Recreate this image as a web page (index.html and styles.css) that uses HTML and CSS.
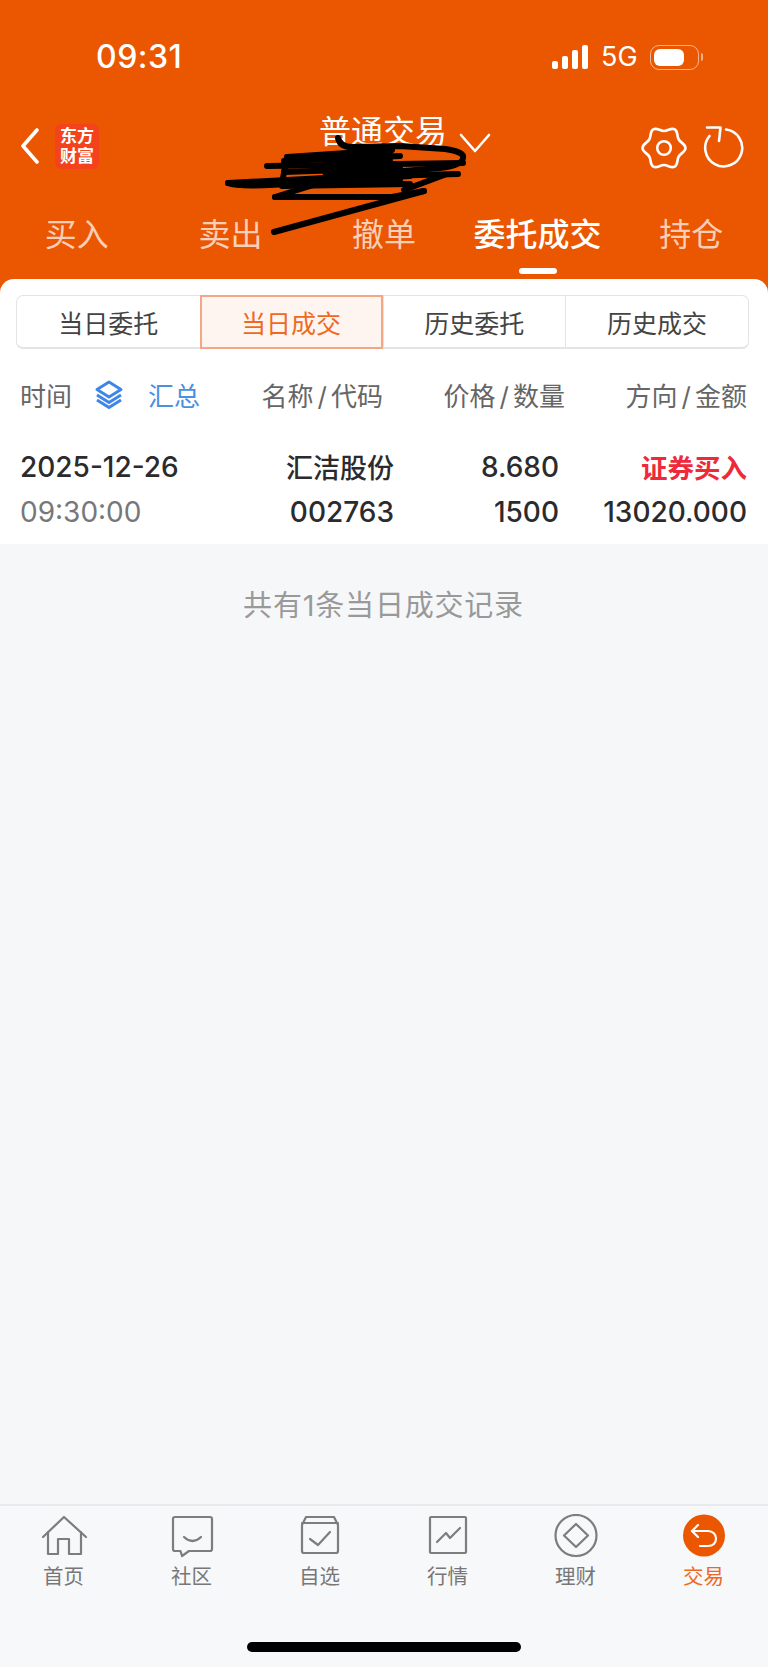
FILE: index.html
```html
<!DOCTYPE html>
<html lang="zh-CN">
<head>
  <meta charset="UTF-8">
  <meta name="viewport" content="width=device-width, initial-scale=1.0">
  <title>普通交易</title>
  <link rel="stylesheet" href="styles.css">
</head>
<body>
  <div class="app">
    <header class="header">
      <!-- 状态栏 -->
      <div class="status-bar">
        <span class="clock">09:31</span>
        <div class="status-icons">
          <div class="signal"><i class="b1"></i><i class="b2"></i><i class="b3"></i><i class="b4"></i></div>
          <span class="network">5G</span>
          <div class="battery"><div class="battery-level"></div></div>
          <div class="battery-tip"></div>
        </div>
      </div>

      <!-- 导航 -->
      <div class="nav-bar">
        <div class="nav-left">
          <svg class="back" width="20" height="36" viewBox="0 0 20 36"><path d="M17 2 L3 18 L17 34"/></svg>
          <div class="logo"><span>东方</span><span>财富</span></div>
        </div>
        <div class="nav-title">
          <span class="title-text">普通交易</span>
          <svg class="title-arrow" width="32" height="20" viewBox="0 0 32 20"><path d="M2 2 L16 18 L30 2"/></svg>
        </div>
        <div class="nav-right">
          <svg width="48" height="48" viewBox="0 0 48 48" class="line-icon">
            <path d="M45.5 24C45.5 28 40.72 29.04 38.72 32.5C36.72 35.96 38.21 40.62 34.75 42.62C31.29 44.62 28 41 24 41C20 41 16.71 44.62 13.25 42.62C9.79 40.62 11.28 35.96 9.28 32.5C7.28 29.04 2.5 28 2.5 24C2.5 20 7.28 18.96 9.28 15.5C11.28 12.04 9.79 7.38 13.25 5.38C16.71 3.38 20 7 24 7C28 7 31.29 3.38 34.75 5.38C38.21 7.38 36.72 12.04 38.72 15.5C40.72 18.96 45.5 20 45.5 24Z"/>
            <circle cx="24" cy="24" r="6.8"/>
          </svg>
          <svg width="44" height="48" viewBox="0 0 44 48" class="line-icon refresh">
            <path d="M25 5.5 A18.5 18.5 0 1 1 8.5 12"/>
            <path d="M6 3.5 H19.5 L18 17"/>
          </svg>
        </div>
      </div>

      <!-- 交易菜单 -->
      <nav class="trade-tabs">
        <a class="trade-tab">买入</a>
        <a class="trade-tab">卖出</a>
        <a class="trade-tab">撤单</a>
        <a class="trade-tab active">委托成交</a>
        <a class="trade-tab">持仓</a>
      </nav>

      <!-- 涂抹 -->
      <svg class="scribble" width="768" height="279" viewBox="0 0 768 279">
        <path d="M338 138 Q340 147 352 147 L400 146 L445 149 Q465 152 463 158 Q462 166 440 168 L392 172"/>
        <path d="M287 157 L392 150"/>
        <path d="M287 157 L282 183"/>
        <path d="M267 166 L463 163"/>
        <path d="M284 161 L400 156"/>
        <path d="M284 172 L400 168"/>
        <path d="M228 183 L343 177 L458 174"/>
        <path d="M228 183 Q240 188 300 183 L400 181"/>
        <path d="M282 186 L410 184"/>
        <path d="M275 197 L392 197 L424 191"/>
        <path d="M275 197 L323 182 L410 176"/>
        <path d="M274 232 L424 191"/>
        <path d="M404 190 L444 175"/>
        <polygon class="blob" points="338,152 392,147 394,178 372,183 328,181 318,168"/>
      </svg>
    </header>

    <section class="panel">
      <div class="segment">
        <div class="segment-item">当日委托</div>
        <div class="segment-item active">当日成交</div>
        <div class="segment-item">历史委托</div>
        <div class="segment-item">历史成交</div>
      </div>

      <div class="row head-row">
        <div class="col-time">
          <span>时间</span>
          <svg width="30" height="30" viewBox="0 0 30 30" class="stack-icon">
            <path d="M15 2 L27 9.5 L15 17 L3 9.5Z"/>
            <path d="M3 15 L15 22.5 L27 15"/>
            <path d="M3 20 L15 27.5 L27 20"/>
          </svg>
          <span class="summary">汇总</span>
        </div>
        <div class="col-name">名称<span class="slash">/</span>代码</div>
        <div class="col-price">价格<span class="slash">/</span>数量</div>
        <div class="col-amount">方向<span class="slash">/</span>金额</div>
      </div>

      <div class="row trade-row">
        <div class="col-time strong">2025-12-26</div>
        <div class="col-name strong stock-name">汇洁股份</div>
        <div class="col-price strong">8.680</div>
        <div class="col-amount buy">证券买入</div>
      </div>
      <div class="row trade-row second">
        <div class="col-time muted">09:30:00</div>
        <div class="col-name strong">002763</div>
        <div class="col-price strong">1500</div>
        <div class="col-amount strong">13020.000</div>
      </div>
    </section>

    <main class="records">
      <p class="records-note">共有1条当日成交记录</p>
    </main>

    <footer class="tabbar">
      <div class="tabbar-items">
        <a class="tabbar-item">
          <svg width="48" height="44" viewBox="0 0 48 44"><path d="M3 23 L24 3 L46 23"/><path d="M8 18 V40 H18 V25 H29 V40 H41 V18"/></svg>
          <span>首页</span>
        </a>
        <a class="tabbar-item">
          <svg width="48" height="44" viewBox="0 0 48 44"><path d="M7 3 H42 a2 2 0 0 1 2 2 V35 a2 2 0 0 1 -2 2 H21 L14 42 L12.5 37 H7 a2 2 0 0 1 -2 -2 V5 a2 2 0 0 1 2 -2Z"/><path d="M16 23 Q24.5 31 33 23"/></svg>
          <span>社区</span>
        </a>
        <a class="tabbar-item">
          <svg width="48" height="44" viewBox="0 0 48 44"><path d="M6 11 L10 3 H38 L42 11 V37 a2 2 0 0 1 -2 2 H8 a2 2 0 0 1 -2 -2Z"/><path d="M6 9 H42"/><path d="M14 25 L22 31 L34 18"/></svg>
          <span>自选</span>
        </a>
        <a class="tabbar-item">
          <svg width="48" height="44" viewBox="0 0 48 44"><rect x="6" y="3" width="36" height="36" rx="1"/><path d="M13 28 L22 19 L26 24 L36 14"/></svg>
          <span>行情</span>
        </a>
        <a class="tabbar-item">
          <svg width="48" height="44" viewBox="0 0 48 44"><circle cx="24" cy="21.5" r="20.5"/><path d="M24 10 L36 21.5 L24 33 L12 21.5Z"/></svg>
          <span>理财</span>
        </a>
        <a class="tabbar-item active">
          <svg width="48" height="44" viewBox="0 0 48 44"><circle class="disc" cx="24" cy="21.5" r="21"/><path class="arrow" d="M18 11 L12 17 L18 23"/><path class="arrow" d="M12 17 H28 C33 17 36 20.5 36 24.5 C36 29 33 32 28 32 H20"/></svg>
          <span>交易</span>
        </a>
      </div>
      <div class="home-bar"></div>
    </footer>
  </div>
</body>
</html>
```

FILE: styles.css
```css
* {
  box-sizing: border-box;
}

body {
  margin: 0;
  font-family: Inter, "Noto Sans CJK SC", sans-serif;
}

.app {
  width: 768px;
  height: 1667px;
  display: flex;
  flex-direction: column;
  background-color: #eb5600;
  overflow: hidden;
}

/* header */
.header {
  position: relative;
  height: 279px;
  color: #fff;
}

.status-bar {
  height: 117px;
  padding: 40px 65px 0 96px;
  display: flex;
  justify-content: space-between;
  align-items: flex-start;
}

.clock {
  font-size: 32px;
  font-weight: 500;
  line-height: 34px;
  letter-spacing: 0.5px;
}

.status-icons {
  display: flex;
  align-items: center;
  height: 34px;
}

.signal {
  display: flex;
  align-items: flex-end;
  gap: 4px;
  height: 24px;
}

.signal i {
  display: block;
  width: 6px;
  background-color: #fff;
  border-radius: 2px;
}

.signal .b1 { height: 8px; }
.signal .b2 { height: 13px; }
.signal .b3 { height: 19px; }
.signal .b4 { height: 24px; }

.network {
  margin-left: 13px;
  font-size: 27px;
  line-height: 30px;
  width: 49px;
}

.battery {
  width: 49px;
  height: 25px;
  padding: 3px;
  border: 1.5px solid rgba(255, 255, 255, 0.55);
  border-radius: 9px;
}

.battery-level {
  width: 30px;
  height: 100%;
  background-color: #fff;
  border-radius: 6px;
}

.battery-tip {
  width: 2px;
  height: 8px;
  margin-left: 2px;
  background-color: rgba(255, 255, 255, 0.55);
  border-radius: 0 2px 2px 0;
}

.nav-bar {
  height: 58px;
  position: relative;
  display: flex;
  justify-content: space-between;
  align-items: center;
  padding: 0 23px 0 20px;
}

.nav-left {
  display: flex;
  align-items: center;
  gap: 15px;
}

.back path,
.title-arrow path,
.line-icon path,
.line-icon circle {
  fill: none;
  stroke: #fff;
  stroke-width: 2.6;
  stroke-linecap: round;
  stroke-linejoin: round;
}

.back path {
  stroke-width: 3.6;
}

.logo {
  width: 44px;
  height: 45px;
  background-color: #f4431c;
  border-radius: 6px;
  display: flex;
  flex-direction: column;
  align-items: center;
  justify-content: center;
  font-size: 17px;
  font-weight: 700;
  line-height: 20px;
}

.nav-title {
  position: absolute;
  left: 319px;
  top: 0;
  display: flex;
}

.title-text {
  font-size: 32px;
  line-height: 40px;
  margin-top: -5px;
}

.title-arrow {
  margin: 16px 0 0 12px;
}

.nav-right {
  display: flex;
  align-items: center;
  gap: 13px;
  margin-top: 3px;
}

.trade-tabs {
  display: flex;
  margin-top: 39px;
}

.trade-tab {
  flex: 1;
  text-align: center;
  font-size: 32px;
  line-height: 42px;
  color: rgba(255, 255, 255, 0.72);
}

.trade-tab.active {
  position: relative;
  color: #fff;
  font-weight: 500;
}

.trade-tab.active::after {
  content: "";
  position: absolute;
  left: 58px;
  bottom: -18px;
  width: 38px;
  height: 6px;
  background-color: #fff;
  border-radius: 3px;
}

.scribble {
  position: absolute;
  left: 0;
  top: 0;
}

.scribble path {
  fill: none;
  stroke: #000;
  stroke-width: 6;
  stroke-linecap: round;
  stroke-linejoin: round;
}

.blob {
  fill: #000;
}

/* panel */
.panel {
  height: 265px;
  padding: 16px 21px 0 20px;
  background-color: #fff;
  border-radius: 14px 14px 0 0;
}

.segment {
  display: grid;
  grid-template-columns: repeat(4, 1fr);
  height: 54px;
  margin: 0 -2px 0 -4px;
  border: 1px solid #e3e4e8;
  border-bottom-width: 2px;
  border-radius: 7px;
  color: #444;
}

.segment-item {
  display: flex;
  align-items: center;
  justify-content: center;
  font-size: 25px;
  border-left: 1px solid #e3e4e8;
}

.segment-item:first-child {
  border-left: none;
}

.segment-item.active {
  margin: -1px 0 -2px;
  color: #ee6a22;
  background-color: #fef5f0;
  border: 2px solid #f4a784;
}

.row {
  display: grid;
  align-items: center;
  text-align: right;
}

.head-row {
  grid-template-columns: 1fr 124px 182px 182px;
  height: 46px;
  margin-top: 22px;
  font-size: 26px;
  color: #666;
}

.slash {
  margin: 0 4px;
}

.col-time {
  text-align: left;
  display: flex;
  align-items: center;
}

.stack-icon {
  margin: 2px 0 0 22px;
}

.stack-icon path {
  fill: none;
  stroke: #3f86e6;
  stroke-width: 3;
  stroke-linejoin: round;
}

.summary {
  margin-left: 24px;
  color: #4a90e2;
}

.trade-row {
  grid-template-columns: 1fr 135px 165px 188px;
  height: 45px;
  margin-top: 27px;
  font-size: 28px;
}

.trade-row.second {
  margin-top: 0;
}

.strong {
  color: #2b2b2e;
  font-weight: 500;
}

.stock-name {
  font-size: 27px;
}

.muted {
  color: #777;
}

.buy {
  color: #ee2a3a;
  font-size: 26.5px;
  font-weight: 700;
}

/* list area */
.records {
  flex: 1;
  background-color: #f6f7f9;
}

.records-note {
  margin: 42px 0 0 -1px;
  text-align: center;
  font-size: 29px;
  letter-spacing: 0.8px;
  line-height: 40px;
  color: #999;
}

/* bottom tabs */
.tabbar {
  height: 163px;
  background-color: #f7f8fa;
  border-top: 2px solid #e9eaed;
}

.tabbar-items {
  display: grid;
  grid-template-columns: repeat(6, 1fr);
  padding-top: 8px;
}

.tabbar-item {
  display: flex;
  flex-direction: column;
  align-items: center;
  font-size: 20.5px;
  line-height: 26px;
  color: #777;
  margin-left: -1px;
}

.tabbar-item svg {
  margin-bottom: 6px;
}

.tabbar-item path,
.tabbar-item rect,
.tabbar-item circle {
  fill: none;
  stroke: #7d7d7d;
  stroke-width: 2.2;
  stroke-linejoin: round;
  stroke-linecap: round;
}

.tabbar-item.active {
  color: #ee6a22;
}

.tabbar-item .disc {
  fill: #eb5600;
  stroke: none;
}

.tabbar-item .arrow {
  stroke: #fff;
}

.home-bar {
  width: 274px;
  height: 10px;
  margin: 52px auto 0;
  background-color: #000;
  border-radius: 5px;
}
```
